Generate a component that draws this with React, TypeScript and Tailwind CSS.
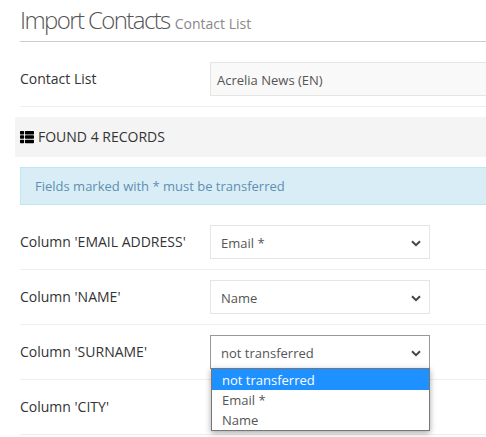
import { FaThList } from "react-icons/fa";

function Chevron() {
  return (
    <svg width="10" height="7" viewBox="0 0 10 7" className="absolute right-[8px] top-[14px]">
      <path d="M1 1.2 L5 5.2 L9 1.2" fill="none" stroke="#444" strokeWidth="2" />
    </svg>
  );
}

function Row({ label, value, focused }: { label: string; value?: string; focused?: boolean }) {
  return (
    <div className="flex h-[55px] border-b border-[#eeeeee] pt-[10px]">
      <div className="w-[190px] pt-[7px] text-[14px] leading-[20px] text-[#333]">{label}</div>
      {value && (
        <div
          className={`relative h-[34px] w-[220px] border pl-[10px] pt-[7px] text-[13px] leading-[20px] text-[#555] ${
            focused ? "border-[#999]" : "border-[#e5e5e5]"
          }`}
        >
          {value}
          <Chevron />
        </div>
      )}
    </div>
  );
}

export default function App() {
  return (
    <div className="relative h-[437px] w-[486px] overflow-hidden bg-white font-['Open_Sans',sans-serif]">
      <div className="pl-[20px]">
        <div className="flex h-[42px] items-baseline border-b border-[#cccccc] pt-[3px]">
          <span className="text-[24px] leading-[33px] font-light tracking-[-1.6px] text-[#555]">Import Contacts</span>
          <span className="ml-[5px] text-[14px] text-[#888]">Contact List</span>
        </div>
        <div className="flex h-[65px] border-b border-[#eeeeee] pt-[20px]">
          <div className="w-[190px] pt-[7px] text-[14px] leading-[20px] text-[#333]">Contact List</div>
          <div className="h-[34px] flex-1 border-y border-l border-[#e5e5e5] bg-[#f9f9f9] pl-[6px] pt-[7px] text-[13px] leading-[20px] text-[#555]">
            Acrelia News (EN)
          </div>
        </div>
      </div>
      <div className="mt-[10px] ml-[15px] flex h-[40px] items-center gap-[4px] bg-[#f4f4f4] pb-[1px] pl-[5px] text-[14px] text-[#333]">
        <FaThList className="text-[14px] text-black" />
        FOUND 4 RECORDS
      </div>
      <div className="pl-[20px]">
        <div className="mt-[10px] mb-[10px] h-[38px] border-y border-l border-[#bce8f1] bg-[#d9edf7] pl-[14px] pt-[8px] text-[13px] leading-[20px] text-[#5f8fb0]">
          Fields marked with * must be transferred
        </div>
        <Row label="Column 'EMAIL ADDRESS'" value="Email *" />
        <Row label="Column 'NAME'" value="Name" />
        <Row label="Column 'SURNAME'" value="not transferred" focused />
        <Row label="Column 'CITY'" />
      </div>
      <div className="absolute top-[368px] left-[211px] w-[219px] border border-[#777] bg-white text-[13px] leading-[20px] text-[#555] shadow-[0_2px_6px_rgba(0,0,0,0.35)]">
        <div className="bg-[#1e90ff] pl-[10px] pt-[1px] text-white">not transferred</div>
        <div className="pl-[10px]">Email *</div>
        <div className="pl-[10px]">Name</div>
      </div>
    </div>
  );
}
